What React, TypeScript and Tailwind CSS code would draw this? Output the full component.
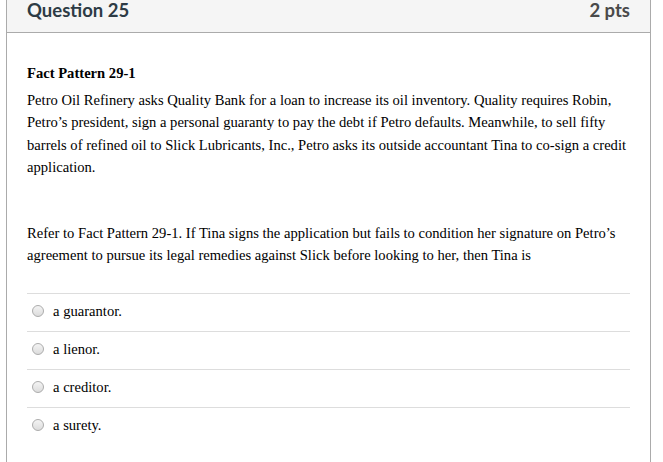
export default function App() {
  const answers = ["a guarantor.", "a lienor.", "a creditor.", "a surety."];

  return (
    <div className="min-h-screen bg-white">
      <div className="ml-[6px] w-[645px] min-h-[462px] border-x border-[#ababab]">
        <div className="flex h-[33px] items-start justify-between border-b border-[#ababab] bg-[#f5f5f5] px-[20px] pt-[1px] font-['Lato',sans-serif] text-[18.5px] leading-[18px] text-[#2d3b45]">
          <span className="font-bold">Question 25</span>
          <span className="font-bold text-[#4a4a4a]">2 pts</span>
        </div>

        <div className="px-[20px] font-['Liberation_Serif','Times_New_Roman',serif] text-[14.6px] leading-[22.5px] text-black">
          <p className="mt-[29px] font-bold">Fact Pattern 29-1</p>
          <p className="mt-[4px]">
            Petro Oil Refinery asks Quality Bank for a loan to increase its oil
            inventory. Quality requires Robin, Petro’s president, sign a
            personal guaranty to pay the debt if Petro defaults. Meanwhile, to
            sell fifty barrels of refined oil to Slick Lubricants, Inc., Petro
            asks its outside accountant Tina to co-sign a credit application.
          </p>
          <p className="mt-[43px]">
            Refer to Fact Pattern 29-1. If Tina signs the application but fails
            to condition her signature on Petro’s agreement to pursue its legal
            remedies against Slick before looking to her, then Tina is
          </p>

          <div className="mt-[26px]">
            {answers.map((a) => (
              <div
                key={a}
                className="flex h-[38px] items-start border-t border-[#dddddd] pt-[6px]"
              >
                <span className="ml-[5px] mt-[5px] h-[12px] w-[12px] shrink-0 rounded-full border border-[#acacac] bg-gradient-to-b from-[#f4f4f4] to-[#dcdcdc]" />
                <span className="ml-[9px]">{a}</span>
              </div>
            ))}
          </div>
        </div>
      </div>
    </div>
  );
}
